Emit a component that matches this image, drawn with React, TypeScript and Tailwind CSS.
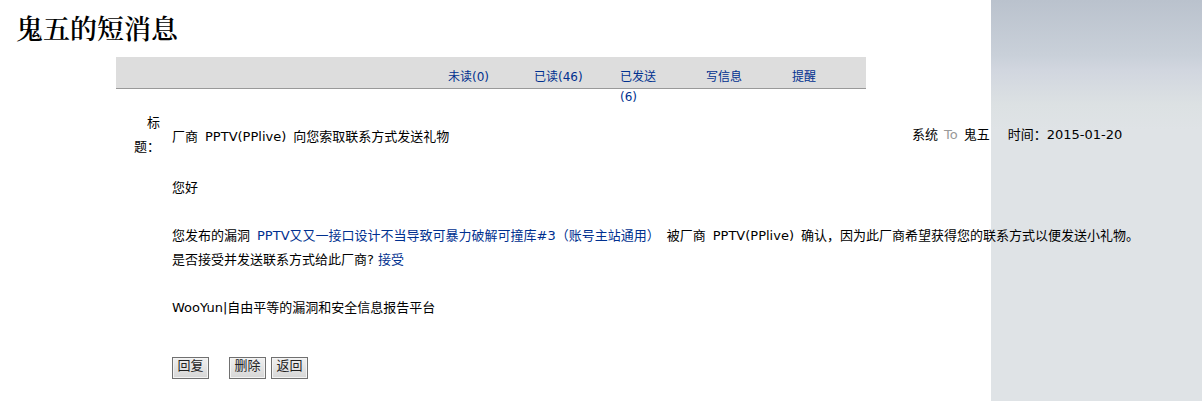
import type { ReactNode } from "react";

const tabs = ["未读(0)", "已读(46)", "已发送 (6)", "写信息", "提醒"];

const linkClass = "text-[#00308f] hover:underline";

function ActionButton({ children }: { children: ReactNode }) {
  return (
    <button
      type="button"
      className="h-[22px] w-[37px] border border-[#707070] bg-linear-to-b from-[#f0f0f0] to-[#d6d6d6] text-[13px] leading-4 text-[#222] inset-ring inset-ring-[#f4f4f4] pb-1"
    >
      {children}
    </button>
  );
}

export default function App() {
  return (
    <div className="min-h-screen bg-[#dfe3e6] bg-[linear-gradient(to_bottom,#bac2cd_0px,#c9d0d9_55px,#d1d6df_70px,#dce1e3_105px,#dfe3e6_130px)] font-['DejaVu_Sans','Noto_Sans_CJK_SC',sans-serif] text-[13px] leading-6 text-black">
      <main className="min-h-screen w-[82.45%] bg-white">
        <h1 className="pt-[10px] pl-4 font-['Liberation_Serif','Noto_Serif_CJK_SC','Noto_Sans_CJK_SC',serif] text-[27px] leading-10 font-semibold">
          鬼五的短消息
        </h1>

        <nav className="mt-[7px] ml-[116px] flex h-8 max-w-[750px] justify-end border-b border-[#999] bg-[#ddd] pt-[10px] text-[12px] leading-5">
          {tabs.map((tab) => (
            <a key={tab} href="#" className={`mr-[34px] w-[52px] shrink-0 last:mr-[22px] ${linkClass}`}>
              {tab}
            </a>
          ))}
        </nav>

        <section className="mt-[22px] ml-[134px] whitespace-nowrap">
          <header className="flex items-center">
            <div className="w-[26px] text-right whitespace-normal">标题：</div>
            <h2 className="ml-3 flex w-[740px] shrink-0 gap-[7px] pt-[3px]">
              <span>厂商</span>
              <span>PPTV(PPlive)</span>
              <span>向您索取联系方式发送礼物</span>
            </h2>
            <div className="flex shrink-0 gap-[6px]">
              <span>系统</span>
              <span className="text-[#999]">To</span>
              <span>鬼五</span>
            </div>
            <div className="ml-[18px] flex shrink-0">
              <span>时间：</span>
              <time dateTime="2015-01-20">2015-01-20</time>
            </div>
          </header>

          <div className="mt-[17px] ml-[38px]">
            <p>您好</p>
            <p className="mt-6 flex gap-[7px]">
              <span>您发布的漏洞</span>
              <a href="#" className={linkClass}>
                PPTV又又一接口设计不当导致可暴力破解可撞库#3（账号主站通用）
              </a>
              <span>被厂商</span>
              <span>PPTV(PPlive)</span>
              <span>确认，因为此厂商希望获得您的联系方式以便发送小礼物。</span>
            </p>
            <p>
              是否接受并发送联系方式给此厂商?{" "}
              <a href="#" className={linkClass}>
                接受
              </a>
            </p>
            <p className="mt-6">WooYun|自由平等的漏洞和安全信息报告平台</p>
            <div className="mt-[37px] flex gap-[5px]">
              <div className="mr-[15px] flex">
                <ActionButton>回复</ActionButton>
              </div>
              <ActionButton>删除</ActionButton>
              <ActionButton>返回</ActionButton>
            </div>
          </div>
        </section>
      </main>
    </div>
  );
}
